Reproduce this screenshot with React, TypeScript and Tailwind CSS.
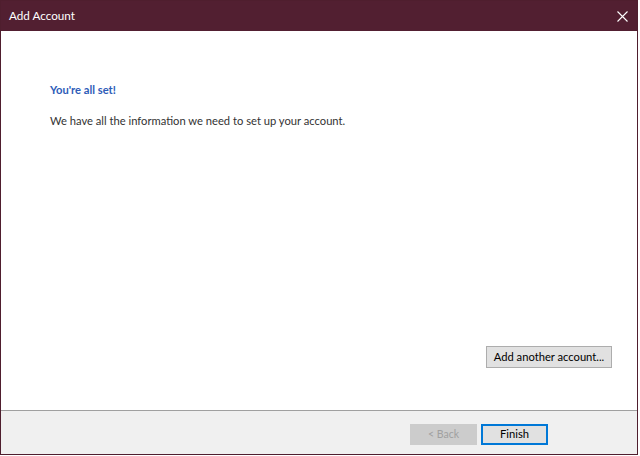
import React from "react";

const font = { fontFamily: 'Lato, "Noto Sans", sans-serif' };

export default function App() {
  return (
    <div className="w-[640px] h-[456px] bg-white" style={font}>
      <div className="w-[638px] h-[455px] flex flex-col border border-[#4f1e2e]">
        {/* title bar */}
        <div className="h-[30px] bg-[#521f31] flex items-center justify-between pl-2 pr-[9px] text-white">
          <span className="text-[11.7px] leading-none">Add Account</span>
          <svg width="11" height="11" viewBox="0 0 11 11" stroke="white" strokeWidth="1.1">
            <path d="M0.5 0.5 L10.5 10.5 M10.5 0.5 L0.5 10.5" />
          </svg>
        </div>

        {/* content */}
        <div className="flex-1 flex flex-col pl-[49px] pr-[25px] pt-[51px] pb-[42px]">
          <div className="text-[11.2px] font-bold text-[#2e5cb8] leading-4">You're all set!</div>
          <div className="text-[11.2px] text-[#333333] leading-4 mt-[15px]">
            We have all the information we need to set up your account.
          </div>
          <div className="flex-1" />
          <div className="flex justify-end">
            <button className="h-[22px] w-[126px] border border-[#adadad] bg-[#e1e1e1] text-[11.2px] text-black leading-none whitespace-nowrap">
              Add another account...
            </button>
          </div>
        </div>

        {/* footer */}
        <div className="h-[44px] border-t border-[#a0a0a0] bg-[#f0f0f0] flex items-center justify-end gap-[4px] pr-[89px] pt-[3px]">
          <button className="h-[21px] w-[67px] border border-[#cccccc] bg-[#cccccc] text-[10.5px] text-[#a0a0a0] leading-none">
            &lt; Back
          </button>
          <button className="h-[21px] w-[67px] border-2 border-[#0078d7] bg-[#e1e1e1] text-[11.2px] text-black leading-none">
            Finish
          </button>
        </div>
      </div>
    </div>
  );
}
